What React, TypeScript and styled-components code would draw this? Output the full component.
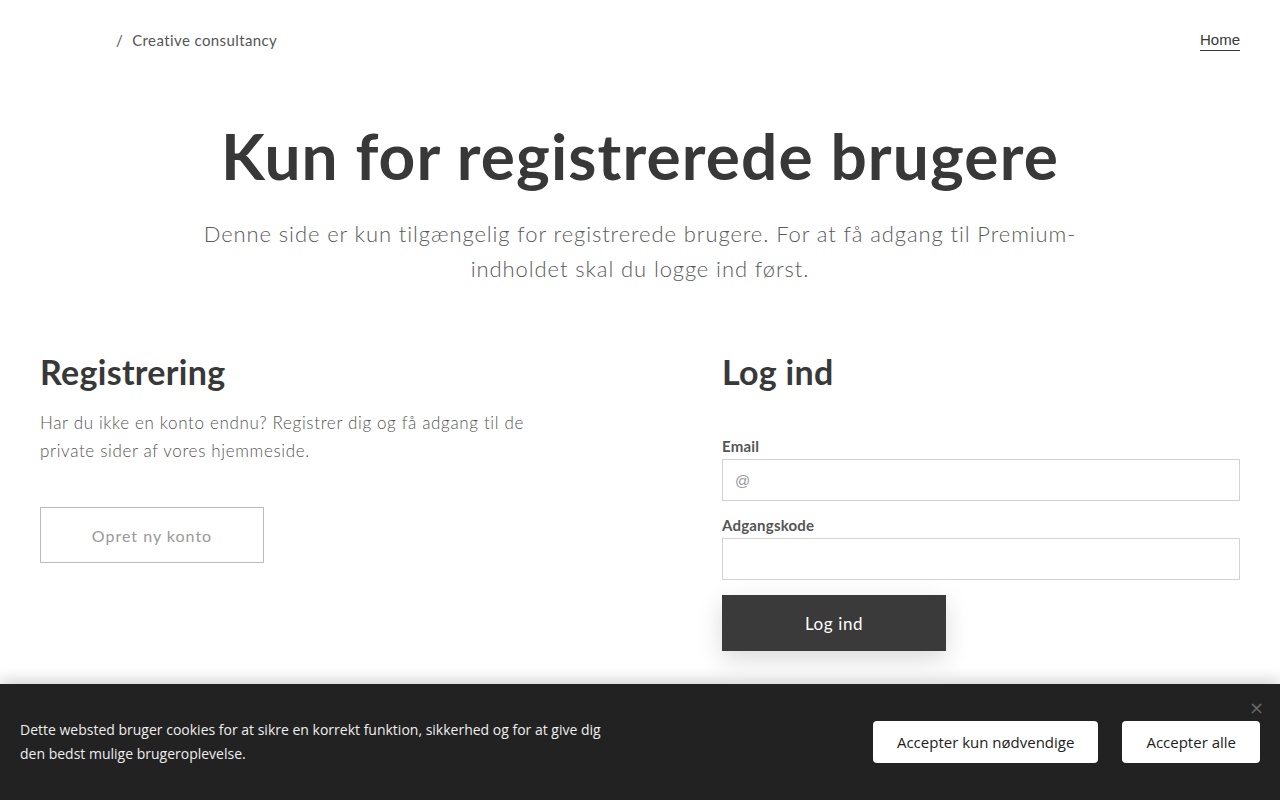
import React from "react";
import styled, { createGlobalStyle } from "styled-components";

const Global = createGlobalStyle`
  html, body { margin: 0; padding: 0; background: #fff; }
  body { font-family: "Lato", "Noto Sans", sans-serif; color: #383838; }
  * { box-sizing: border-box; }
`;

const Page = styled.div`
  width: 1280px;
  min-height: 800px;
  position: relative;
  overflow: hidden;
`;

const Header = styled.header`
  display: flex;
  align-items: center;
  justify-content: space-between;
  height: 80px;
  padding: 0 40px 0 116px;
`;

const Crumb = styled.div`
  display: flex;
  align-items: center;
  gap: 9px;
  font-size: 15px;
  color: #555;
  letter-spacing: 0.4px;
`;

const NavLink = styled.a`
  font-family: "Liberation Sans", Arial, sans-serif;
  font-size: 15px;
  color: #383838;
  text-decoration: none;
  border-bottom: 1.5px solid #383838;
  padding-bottom: 2px;
  margin-top: 2px;
`;

const Hero = styled.section`
  display: flex;
  flex-direction: column;
  align-items: center;
  text-align: center;
  padding-top: 36px;
`;

const Title = styled.h1`
  margin: 0;
  font-size: 64px;
  font-weight: 700;
  line-height: 80px;
  color: #383838;
  letter-spacing: 1.1px;
`;

const Lead = styled.p`
  margin: 20px 0 0;
  width: 900px;
  font-size: 22px;
  font-weight: 300;
  line-height: 35px;
  color: #5a5a5a;
  letter-spacing: 0.9px;
`;

const Columns = styled.section`
  display: grid;
  grid-template-columns: 518px 518px;
  column-gap: 164px;
  padding: 61px 40px 0;
`;

const Column = styled.div`
  display: flex;
  flex-direction: column;
  align-items: flex-start;
`;

const SectionTitle = styled.h2`
  margin: 0;
  font-size: 34px;
  font-weight: 700;
  line-height: 50px;
  color: #383838;
  letter-spacing: 0.3px;
`;

const Text = styled.p`
  margin: 12px 0 0;
  font-size: 17px;
  font-weight: 300;
  line-height: 28px;
  color: #555;
  letter-spacing: 0.65px;
`;

const OutlineButton = styled.button`
  margin-top: 42px;
  width: 224px;
  height: 56px;
  background: #fff;
  border: 1px solid #bbb;
  color: #999;
  font-family: inherit;
  font-size: 16px;
  letter-spacing: 1px;
`;

const Form = styled.form`
  width: 100%;
  display: flex;
  flex-direction: column;
  margin-top: 39px;
`;

const Label = styled.label`
  font-size: 15px;
  font-weight: 700;
  color: #555;
  line-height: 20px;
  margin-bottom: 3px;
  letter-spacing: 0.2px;
`;

const Input = styled.input`
  width: 100%;
  height: 42px;
  border: 1px solid #d3d3d3;
  padding: 0 12px;
  font-family: "Liberation Sans", Arial, sans-serif;
  font-size: 15px;
  color: #333;
  margin-bottom: 14px;
  &::placeholder { color: #999; }
`;

const SolidButton = styled.button`
  margin-top: 1px;
  width: 224px;
  height: 56px;
  background: #3a3a3a;
  border: none;
  color: #fff;
  font-family: inherit;
  font-size: 17px;
  letter-spacing: 0.6px;
  box-shadow: 0 8px 24px rgba(0, 0, 0, 0.15);
`;

const Cookie = styled.div`
  position: absolute;
  left: 0;
  right: 0;
  bottom: 0;
  height: 116px;
  background: #222;
  box-shadow: 0 -4px 14px rgba(0, 0, 0, 0.18);
  display: flex;
  align-items: center;
  justify-content: space-between;
  padding: 0 20px;
  font-family: "Open Sans", "Noto Sans", sans-serif;
`;

const CookieText = styled.p`
  margin: 0;
  width: 600px;
  font-size: 14px;
  line-height: 24px;
  color: #eee;
`;

const CookieActions = styled.div`
  display: flex;
  gap: 24px;
`;

const CookieButton = styled.button`
  height: 42px;
  padding: 0 24px;
  background: #fff;
  border: none;
  border-radius: 4px;
  color: #222;
  font-family: inherit;
  font-size: 15px;
`;

const Close = styled.span`
  position: absolute;
  top: 14px;
  right: 16px;
  font-family: "DejaVu Sans", sans-serif;
  font-size: 18px;
  color: #666;
  line-height: 20px;
`;

export default function App() {
  return (
    <Page>
      <Global />
      <Header>
        <Crumb>
          <span>/</span>
          <span>Creative consultancy</span>
        </Crumb>
        <NavLink href="#">Home</NavLink>
      </Header>
      <Hero>
        <Title>Kun for registrerede brugere</Title>
        <Lead>
          Denne side er kun tilgængelig for registrerede brugere. For at få adgang til Premium-indholdet skal du logge ind først.
        </Lead>
      </Hero>
      <Columns>
        <Column>
          <SectionTitle>Registrering</SectionTitle>
          <Text>Har du ikke en konto endnu? Registrer dig og få adgang til de private sider af vores hjemmeside.</Text>
          <OutlineButton>Opret ny konto</OutlineButton>
        </Column>
        <Column>
          <SectionTitle>Log ind</SectionTitle>
          <Form onSubmit={(e) => e.preventDefault()}>
            <Label>Email</Label>
            <Input placeholder="@" />
            <Label>Adgangskode</Label>
            <Input type="password" />
            <SolidButton>Log ind</SolidButton>
          </Form>
        </Column>
      </Columns>
      <Cookie>
        <CookieText>
          Dette websted bruger cookies for at sikre en korrekt funktion, sikkerhed og for at give dig den bedst mulige brugeroplevelse.
        </CookieText>
        <CookieActions>
          <CookieButton>Accepter kun nødvendige</CookieButton>
          <CookieButton>Accepter alle</CookieButton>
        </CookieActions>
        <Close>×</Close>
      </Cookie>
    </Page>
  );
}
